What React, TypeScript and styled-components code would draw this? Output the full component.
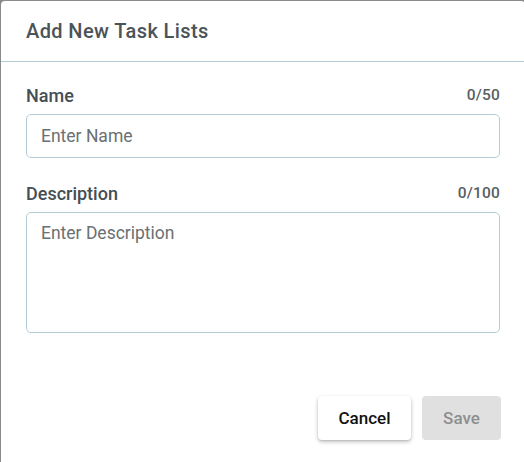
import React from "react";
import styled, { createGlobalStyle } from "styled-components";

const Global = createGlobalStyle`
  html, body { margin: 0; padding: 0; background: #8a8a8a; }
  body { font-family: Roboto, "Noto Sans", Arial, sans-serif; overflow: hidden; }
  * { box-sizing: border-box; }
`;

const Dialog = styled.div`
  margin: 1px 0 0 1px;
  width: 524px;
  height: 470px;
  background: #ffffff;
  border-radius: 4px 4px 0 0;
  display: flex;
  flex-direction: column;
`;

const Header = styled.div`
  height: 61px;
  padding: 0 25px;
  display: flex;
  align-items: center;
  border-bottom: 1px solid #b3cbd3;
`;

const Title = styled.h2`
  margin: 0;
  font-size: 20px;
  font-weight: 500;
  color: #4a5358;
  letter-spacing: 0.4px;
`;

const Body = styled.div`
  padding: 23px 25px 0 25px;
  display: flex;
  flex-direction: column;
  gap: 25px;
`;

const Field = styled.div`
  display: flex;
  flex-direction: column;
  gap: 9px;
`;

const LabelRow = styled.div`
  height: 20px;
  display: flex;
  align-items: center;
  justify-content: space-between;
`;

const Label = styled.label`
  font-size: 18px;
  font-weight: 500;
  color: #454e53;
`;

const Counter = styled.span`
  font-size: 15.5px;
  font-weight: 500;
  color: #585f63;
  letter-spacing: 0.2px;
`;

const inputBase = `
  width: 100%;
  border: 1px solid #b3cdd6;
  border-radius: 5px;
  font-family: Roboto, "Noto Sans", Arial, sans-serif;
  font-size: 17.5px;
  color: #333;
  padding: 0 14px;
  outline: none;
  background: #fff;
  &::placeholder { color: #6a7073; opacity: 1; }
`;

const TextInput = styled.input`
  ${inputBase}
  height: 44px;
`;

const TextArea = styled.textarea`
  ${inputBase}
  height: 121px;
  padding-top: 9px;
  resize: none;
  line-height: 22px;
`;

const Footer = styled.div`
  margin-top: 63px;
  padding: 0 24px 0 25px;
  display: flex;
  justify-content: flex-end;
  gap: 11px;
`;

const Button = styled.button<{ $variant: "plain" | "disabled" }>`
  height: 44px;
  padding: 0;
  border: none;
  border-radius: 4px;
  font-family: Roboto, "Noto Sans", Arial, sans-serif;
  font-size: 17px;
  font-weight: 500;
  cursor: ${(p) => (p.$variant === "disabled" ? "default" : "pointer")};
  background: ${(p) => (p.$variant === "disabled" ? "#e0e0e0" : "#ffffff")};
  color: ${(p) => (p.$variant === "disabled" ? "#8e8e8e" : "#111111")};
  box-shadow: ${(p) =>
    p.$variant === "disabled"
      ? "none"
      : "0 2px 4px rgba(0,0,0,0.22), 0 1px 2px rgba(0,0,0,0.12)"};
`;

export default function App() {
  return (
    <>
      <Global />
      <Dialog>
        <Header>
          <Title>Add New Task Lists</Title>
        </Header>
        <Body>
          <Field>
            <LabelRow>
              <Label>Name</Label>
              <Counter>0/50</Counter>
            </LabelRow>
            <TextInput placeholder="Enter Name" />
          </Field>
          <Field>
            <LabelRow>
              <Label>Description</Label>
              <Counter>0/100</Counter>
            </LabelRow>
            <TextArea placeholder="Enter Description" />
          </Field>
        </Body>
        <Footer>
          <Button $variant="plain" style={{ width: 93 }}>Cancel</Button>
          <Button $variant="disabled" disabled style={{ width: 79 }}>Save</Button>
        </Footer>
      </Dialog>
    </>
  );
}
